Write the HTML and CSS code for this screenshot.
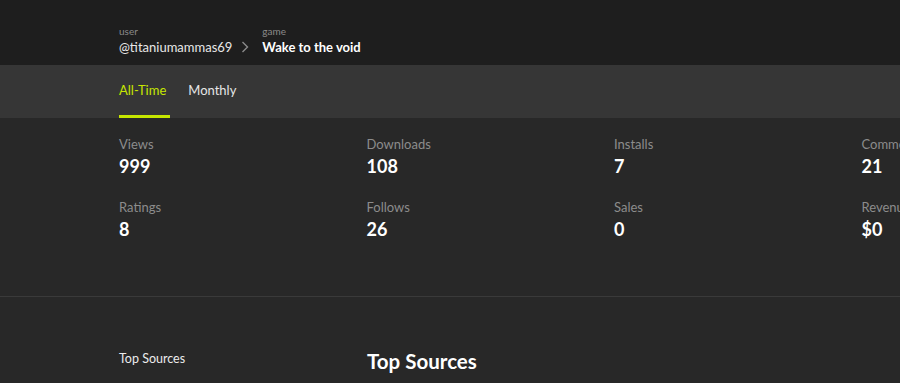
FILE: index.html
```html
<!DOCTYPE html>
<html>
<head>
<meta charset="utf-8">
<link rel="stylesheet" href="styles.css">
</head>
<body>
<header class="header">
  <div class="wrap crumbs">
    <div class="crumb">
      <div class="crumb-label">user</div>
      <div class="crumb-value">@titaniumammas69</div>
    </div>
    <svg class="chev" width="8" height="12" viewBox="0 0 8 12"><path d="M1.5 1 L6.5 6 L1.5 11" fill="none" stroke="#8a8a8a" stroke-width="1.4"/></svg>
    <div class="crumb">
      <div class="crumb-label">game</div>
      <div class="crumb-value strong">Wake to the void</div>
    </div>
  </div>
</header>
<nav class="tabs">
  <div class="wrap tab-row">
    <div class="tab active">All-Time</div>
    <div class="tab">Monthly</div>
  </div>
</nav>
<main class="content">
  <section class="stats">
    <div class="wrap stat-grid">
      <div class="stat"><div class="stat-label">Views</div><div class="stat-value">999</div></div>
      <div class="stat"><div class="stat-label">Downloads</div><div class="stat-value">108</div></div>
      <div class="stat"><div class="stat-label">Installs</div><div class="stat-value">7</div></div>
      <div class="stat"><div class="stat-label">Comments</div><div class="stat-value">21</div></div>
      <div class="stat"><div class="stat-label">Ratings</div><div class="stat-value">8</div></div>
      <div class="stat"><div class="stat-label">Follows</div><div class="stat-value">26</div></div>
      <div class="stat"><div class="stat-label">Sales</div><div class="stat-value">0</div></div>
      <div class="stat"><div class="stat-label">Revenue</div><div class="stat-value">$0</div></div>
    </div>
  </section>
  <section class="sources">
    <div class="wrap sources-row">
      <aside class="side">Top Sources</aside>
      <div class="main">
        <h2 class="main-title">Top Sources</h2>
      </div>
    </div>
  </section>
</main>
</body>
</html>
```
FILE: styles.css
```css
* { box-sizing: border-box; }
html, body {
  margin: 0;
  padding: 0;
  background: #282828;
  overflow: hidden;
  font-family: Lato, "Open Sans", sans-serif;
  color: #ffffff;
}
.wrap {
  margin-left: 119px;
  width: 990px;
}
.header {
  background: #1e1e1e;
  height: 65px;
  padding-top: 25px;
}
.crumbs {
  display: flex;
  align-items: flex-end;
}
.crumb-label {
  font-size: 10px;
  line-height: 13px;
  color: #8a8a8a;
}
.crumb-value {
  font-size: 13px;
  line-height: 18px;
  color: #e8e8e8;
}
.crumb-value.strong {
  font-weight: 700;
  color: #ffffff;
}
.chev {
  margin: 0 13px 3px 9px;
}
.tabs {
  background: #363636;
  height: 53px;
}
.tab-row {
  display: flex;
  gap: 18px;
}
.tab {
  font-size: 13px;
  line-height: 18px;
  padding: 16px 0 16px;
  border-bottom: 3px solid transparent;
  color: #e6e6e6;
}
.tab.active {
  color: #c6e600;
  border-bottom-color: #c6e600;
  padding-right: 4px;
}
.stats {
  padding: 16px 0 55px;
  border-bottom: 1px solid #3a3a3a;
}
.stat-grid {
  display: grid;
  grid-template-columns: repeat(4, 247.5px);
  row-gap: 19px;
}
.stat-label {
  font-size: 13px;
  line-height: 20px;
  color: #8c8c8c;
}
.stat-value {
  font-size: 18px;
  line-height: 24px;
  font-weight: 700;
  color: #ffffff;
}
.sources-row {
  display: grid;
  grid-template-columns: 248px 1fr;
  padding-top: 50px;
}
.side {
  font-size: 12.5px;
  line-height: 18px;
  color: #ececec;
  padding-top: 3px;
}
.main-title {
  margin: 0;
  font-size: 20.5px;
  line-height: 26px;
  font-weight: 700;
  padding-top: 1px;
}
```
